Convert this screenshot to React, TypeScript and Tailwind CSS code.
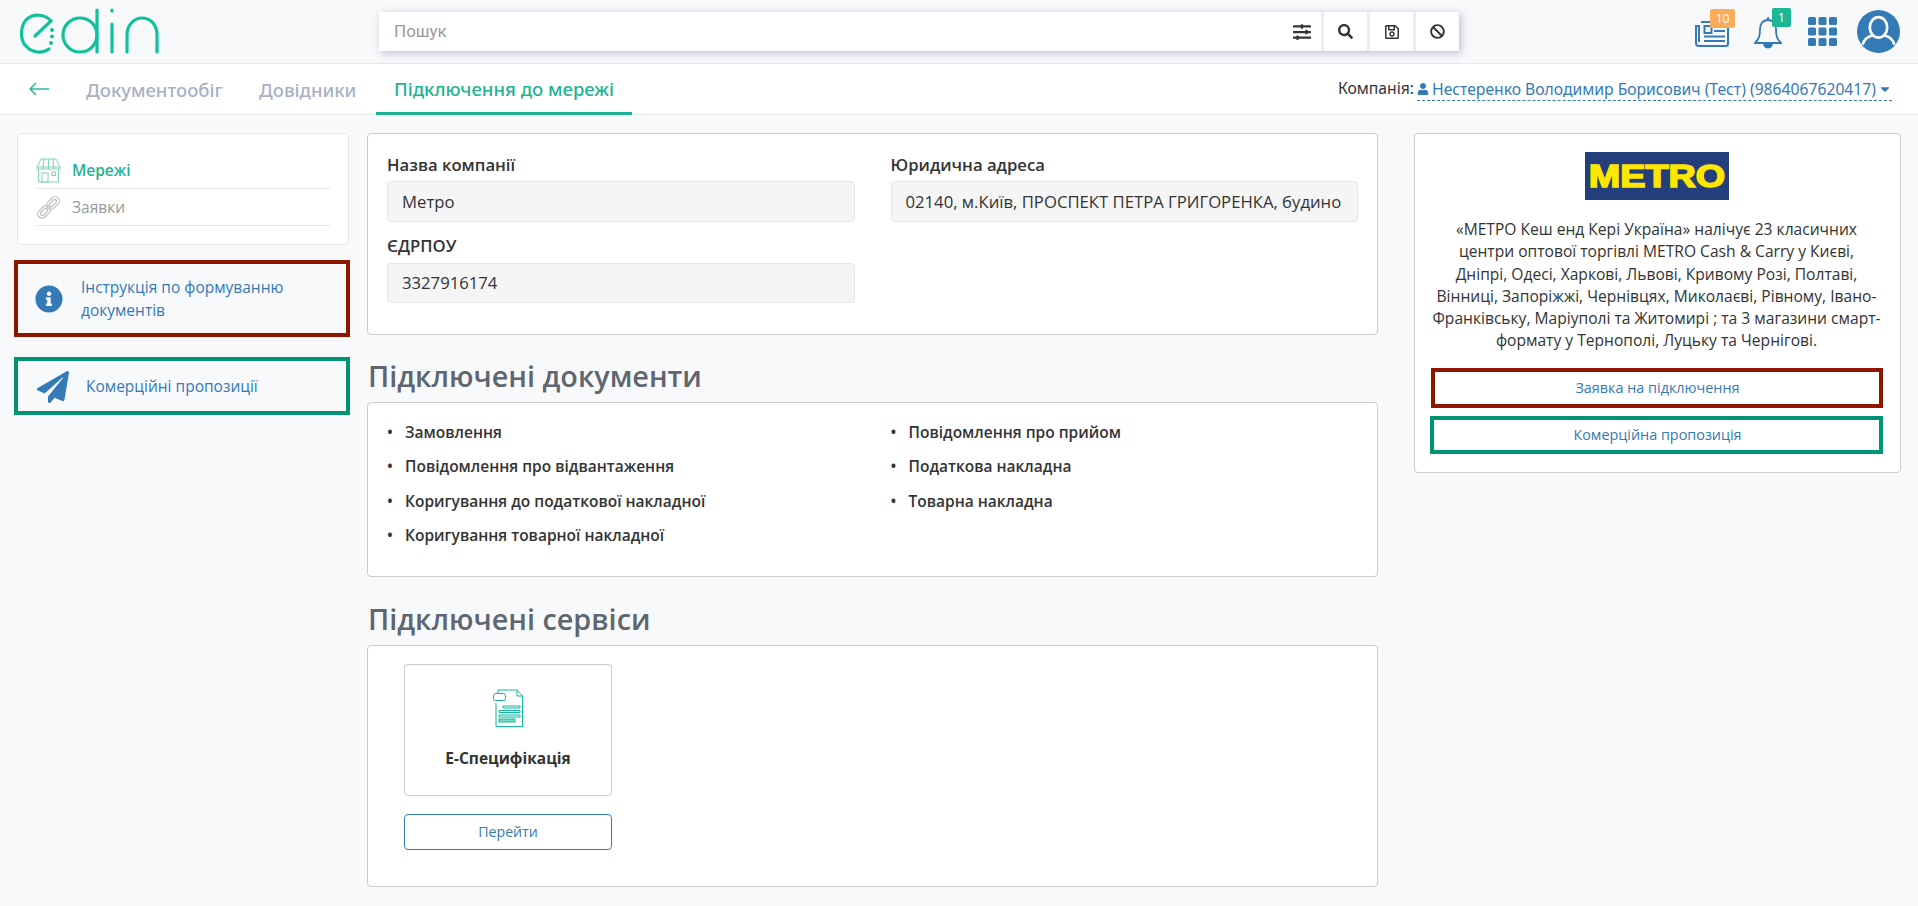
import { FaBan, FaCaretDown, FaInfoCircle, FaPaperPlane, FaRegSave, FaSearch, FaSlidersH, FaUser } from "react-icons/fa";

const DOCS_LEFT = [
  "Замовлення",
  "Повідомлення про відвантаження",
  "Коригування до податкової накладної",
  "Коригування товарної накладної",
];
const DOCS_RIGHT = ["Повідомлення про прийом", "Податкова накладна", "Товарна накладна"];

const ABOUT_LINES = [
  "«МЕТРО Кеш енд Кері Україна» налічує 23 класичних",
  "центри оптової торгівлі METRO Cash & Carry у Києві,",
  "Дніпрі, Одесі, Харкові, Львові, Кривому Розі, Полтаві,",
  "Вінниці, Запоріжжі, Чернівцях, Миколаєві, Рівному, Івано-",
  "Франківську, Маріуполі та Житомирі ; та 3 магазини смарт-",
  "формату у Тернополі, Луцьку та Чернігові.",
];

function EdinLogo() {
  return (
    <svg width="142" height="50" viewBox="0 0 142 50" fill="none" stroke="#0fc29c" strokeWidth="3.2" strokeLinecap="round">
      <path d="M16 29 L32 14 C26 7 14 6 7 13 C1 20 1 33 7 39 C13 46 23 47 30 42" />
      <circle cx="33" cy="23" r="2" fill="#0fc29c" stroke="none" />
      <circle cx="33" cy="29.500" r="2" fill="#0fc29c" stroke="none" />
      <circle cx="32" cy="36" r="2" fill="#0fc29c" stroke="none" />
      <circle cx="61" cy="28" r="17" />
      <path d="M78 3 V45" />
      <path d="M93 3 V4" />
      <path d="M93 17 V45" />
      <path d="M108 45 V28 C108 17 116 11 123 11 C131 11 138 17 138 28 V45" />
    </svg>
  );
}

function NewsIcon() {
  return (
    <svg width="34" height="29" viewBox="0 0 34 29" fill="none" stroke="#337ab7" strokeWidth="2">
      <path d="M6 4 H33 V26 a2 2 0 0 1 -2 2 H4 a3 3 0 0 1 -3 -3 V8 H4 V24" />
      <rect x="9.500" y="8" width="7" height="7" />
      <path d="M19 9 H30 M19 13 H30 M9 18.500 H30 M9 23 H30" />
    </svg>
  );
}

function BellIcon() {
  return (
    <svg width="28" height="34" viewBox="0 0 28 34" fill="none" stroke="#337ab7" strokeWidth="1.800">
      <path d="M14 4 C8 4 6 9 6 13 C6 20 5 23 1 27 H27 C23 23 22 20 22 13 C22 9 20 4 14 4 Z" />
      <path d="M14 1 V4" />
      <path d="M10 27 C10 33 18 33 18 27" fill="#337ab7" />
    </svg>
  );
}

function GridIcon() {
  return (
    <svg width="29" height="29" viewBox="0 0 29 29" fill="#337ab7">
      {[0, 10.5, 21].map((y) =>
        [0, 10.5, 21].map((x) => <rect key={`${x}-${y}`} x={x} y={y} width="8" height="8" rx="1.500" />)
      )}
    </svg>
  );
}

function AvatarIcon() {
  return (
    <svg width="43" height="43" viewBox="0 0 42 42">
      <circle cx="21" cy="21" r="21" fill="#337ab7" />
      <ellipse cx="21" cy="17" rx="8.500" ry="10" fill="none" stroke="#fff" strokeWidth="2.600" />
      <path d="M5.500 34 C7 27 12 26 15 25 M36.500 34 C35 27 30 26 27 25" fill="none" stroke="#fff" strokeWidth="2.600" />
    </svg>
  );
}

function StoreIcon() {
  return (
    <svg width="25" height="25" viewBox="0 0 25 25" fill="none" stroke="#7ed3b8" strokeWidth="1">
      <path d="M5 1 H20 L24 9 V11 H1 V9 Z" />
      <path d="M1 9 H24 M8 1 L7 11 M12.500 1 V11 M17 1 L18 11" />
      <path d="M2.500 11 V24 H22.500 V11" />
      <rect x="6" y="15" width="6" height="9" />
      <rect x="16" y="14" width="3.500" height="3.500" />
    </svg>
  );
}

function LinkIcon() {
  return (
    <svg width="25" height="25" viewBox="0 0 26 26" fill="none" stroke="#bdbdbd" strokeWidth="1.200">
      <g transform="rotate(-45 13 13)">
        <rect x="-1" y="8.500" width="15" height="9" rx="4.500" />
        <rect x="2" y="11" width="9" height="4" rx="2" />
        <rect x="12" y="8.500" width="15" height="9" rx="4.500" />
        <rect x="15" y="11" width="9" height="4" rx="2" />
      </g>
    </svg>
  );
}

function SpecIcon() {
  return (
    <svg width="31" height="40" viewBox="0 0 31 40" fill="none" stroke="#12b89a" strokeWidth="1">
      <path d="M3 14 V37.500 H29.500 V7 L24 1 H5 V4" />
      <path d="M24 1 V7 H29.500" />
      <rect x="0.500" y="4.500" width="12" height="7" rx="2" />
      <path d="M10 17 H27 V19 H10 Z M6 21.500 H27 V23.500 H6 Z M6 26 H27 V28 H6 Z" />
      <rect x="6" y="30" width="16" height="3" fill="#7adbc6" />
    </svg>
  );
}

function BackArrow() {
  return (
    <svg width="20" height="14" viewBox="0 0 20 14" fill="none" stroke="#2bb99a" strokeWidth="1.500">
      <path d="M20 7 H1 M7 1 L1 7 L7 13" />
    </svg>
  );
}

function SearchButton({ children }: { children: React.ReactNode }) {
  return <div className="flex items-center justify-center w-[46px] border-l-[3px] border-[#ececec] text-[#333]">{children}</div>;
}

export default function App() {
  return (
    <div className="min-h-[906px] bg-[#f8f9fb] font-['Open_Sans',sans-serif] text-[15.500px] text-[#333]">
      <header className="h-[64px] flex items-center border-b border-[#e6e8ec]">
        <div className="w-[379px] pl-[19px] shrink-0">
          <EdinLogo />
        </div>
        <div className="w-[1080px] h-[39px] flex bg-white shadow-[2px_2px_8px_rgba(70,80,120,0.35)]">
          <div className="flex-1 pl-[15px] flex items-center font-['Roboto',sans-serif] text-[17px] text-[#999]">Пошук</div>
          <div className="flex items-center pr-[10px] text-[#333]"><FaSlidersH size={18} /></div>
          <SearchButton><FaSearch size={15} /></SearchButton>
          <SearchButton><FaRegSave size={16} /></SearchButton>
          <SearchButton><FaBan size={15} /></SearchButton>
        </div>
        <div className="flex-1 flex items-center justify-end pr-[18px]">
          <div className="relative mr-[25px] mt-[1px]">
            <NewsIcon />
            <span className="absolute -top-[9px] left-[15px] w-[25px] h-[19px] rounded-[2px] bg-[#f9ad5b] text-white text-[12px] leading-[19px] text-center">10</span>
          </div>
          <div className="relative mr-[26px] mt-[2px]">
            <BellIcon />
            <span className="absolute -top-[8px] left-[18px] w-[19px] h-[19px] rounded-[2px] bg-[#1cb896] text-white text-[12px] leading-[19px] text-center">1</span>
          </div>
          <div className="mr-[20px] flex"><GridIcon /></div>
          <AvatarIcon />
        </div>
      </header>

      <nav className="h-[51px] bg-white border-b border-[#e6e8ec] flex items-stretch pl-[29px] pr-[26px] font-['Noto_Sans',sans-serif]">
        <div className="flex items-center w-[57px]"><BackArrow /></div>
        <div className="flex items-center text-[#a9b0c6] text-[18.500px] font-medium w-[173px] pt-[1px]">Документообіг</div>
        <div className="flex items-center text-[#a9b0c6] text-[18.500px] font-medium w-[117px] pt-[1px]">Довідники</div>
        <div className="flex items-center justify-center text-[#1fb393] text-[18.500px] font-medium w-[256px] pt-[1px] border-b-[3px] border-[#1fb393] -mb-px">Підключення до мережі</div>
        <div className="flex-1 flex items-center justify-end text-[15.700px]">
          <span className="mr-[3px]">Компанія:</span>
          <span className="flex items-center text-[#337ab7] border-b border-dashed border-[#337ab7] leading-[22px]">
            <FaUser size={12} className="mr-[3px]" />
            Нестеренко Володимир Борисович (Тест) (9864067620417)
            <FaCaretDown size={14} className="ml-[2px]" />
          </span>
        </div>
      </nav>

      <main className="flex items-start pt-[18px]">
        <aside className="w-[350px] pl-[14px] shrink-0">
          <div className="ml-[3px] mr-[1px] h-[112px] bg-white border border-[#e6e8ec] rounded-[4px] pt-[18px] px-[18px]">
            <div className="h-[37px] pt-[1px] flex items-center gap-[11px] border-b border-[#e6e8ec] text-[#1fb393] font-semibold">
              <StoreIcon />
              Мережі
            </div>
            <div className="h-[37px] pt-[1px] flex items-center gap-[11px] border-b border-[#e6e8ec] text-[#999]">
              <LinkIcon />
              Заявки
            </div>
          </div>
          <div className="mt-[15px] h-[77px] border-[4px] border-[#8f1500] flex items-center pl-[17px] text-[#337ab7] leading-[23px]">
            <FaInfoCircle size={28} className="mr-[18px] shrink-0" />
            <span className="w-[230px]">Інструкція по формуванню документів</span>
          </div>
          <div className="mt-[20px] h-[58px] pt-[1px] border-[4px] border-[#009474] flex items-center pl-[19px] text-[#337ab7]">
            <FaPaperPlane size={32} className="mr-[17px] shrink-0" />
            Комерційні пропозиції
          </div>
        </aside>

        <section className="w-[1011px] ml-[17px] shrink-0">
          <div className="h-[202px] bg-white border border-[#ccc] rounded-[4px] pt-[20px] px-[19px] grid grid-cols-2 gap-x-[36px] content-start text-[16.700px]">
            <div>
              <div className="font-semibold leading-[22px]">Назва компанії</div>
              <div className="mt-[5px] h-[41px] bg-[#f5f5f5] border border-[#e6e6e6] rounded-[4px] flex items-center px-[14px]">Метро</div>
              <div className="mt-[13px] font-semibold leading-[22px]">ЄДРПОУ</div>
              <div className="mt-[6px] h-[40px] bg-[#f5f5f5] border border-[#e6e6e6] rounded-[4px] flex items-center px-[14px]">3327916174</div>
            </div>
            <div className="min-w-0">
              <div className="font-semibold leading-[22px]">Юридична адреса</div>
              <div className="mt-[5px] h-[41px] bg-[#f5f5f5] border border-[#e6e6e6] rounded-[4px] flex items-center px-[14px] whitespace-nowrap">02140, м.Київ, ПРОСПЕКТ ПЕТРА ГРИГОРЕНКА, будино</div>
            </div>
          </div>

          <h2 className="mt-[21px] pl-[1px] text-[28.800px] leading-[40px] font-semibold text-[#5e6670]">Підключені документи</h2>
          <div className="mt-[6px] h-[175px] bg-white border border-[#ccc] rounded-[4px] pt-[12px] px-[19px] grid grid-cols-2 gap-x-[36px] content-start">
            <ul>
              {DOCS_LEFT.map((d) => (
                <li key={d} className="h-[34.500px] flex items-center font-semibold">
                  <span className="w-[18px] text-[#333]">•</span>{d}
                </li>
              ))}
            </ul>
            <ul>
              {DOCS_RIGHT.map((d) => (
                <li key={d} className="h-[34.500px] flex items-center font-semibold">
                  <span className="w-[18px] text-[#333]">•</span>{d}
                </li>
              ))}
            </ul>
          </div>

          <h2 className="mt-[22px] pl-[1px] text-[28.800px] leading-[40px] font-semibold text-[#5e6670]">Підключені сервіси</h2>
          <div className="mt-[6px] h-[242px] bg-white border border-[#ccc] rounded-[4px] pt-[18px] pl-[36px]">
            <div className="w-[208px] h-[132px] border border-[#ccc] rounded-[4px] flex flex-col items-center pt-[24px]">
              <SpecIcon />
              <div className="mt-[18px] font-bold text-[#333]">Е-Специфікація</div>
            </div>
            <div className="mt-[18px] w-[208px] h-[36px] border border-[#337ab7] rounded-[4px] flex items-center justify-center text-[14.200px] text-[#337ab7]">Перейти</div>
          </div>
        </section>

        <aside className="w-[487px] ml-[36px] shrink-0 h-[340px] bg-white border border-[#ccc] rounded-[4px] pt-[18px] pl-[16px] pr-[18px] flex flex-col items-center">
          <div className="w-[144px] h-[48px] bg-[#233e7b] flex items-center justify-center overflow-hidden">
            <span className="font-['Liberation_Sans',sans-serif] font-bold text-[31px] leading-none text-[#ffe600] scale-x-[1.22] [-webkit-text-stroke:1.500px_#ffe600]">METRO</span>
          </div>
          <p className="mt-[18px] text-center leading-[22.300px] whitespace-nowrap text-[15.600px]">
            {ABOUT_LINES.map((line) => (
              <span key={line} className="block">{line}</span>
            ))}
          </p>
          <div className="mt-[16px] pl-[2px] w-[452px] h-[40px] border-[4px] border-[#8f1500] flex items-center justify-center text-[14.400px] text-[#337ab7] shrink-0">Заявка на підключення</div>
          <div className="mt-[8px] pl-[2px] w-[453px] h-[38px] border-[4px] border-[#009474] flex items-center justify-center text-[14.400px] text-[#337ab7] shrink-0">Комерційна пропозиція</div>
        </aside>
      </main>
    </div>
  );
}
